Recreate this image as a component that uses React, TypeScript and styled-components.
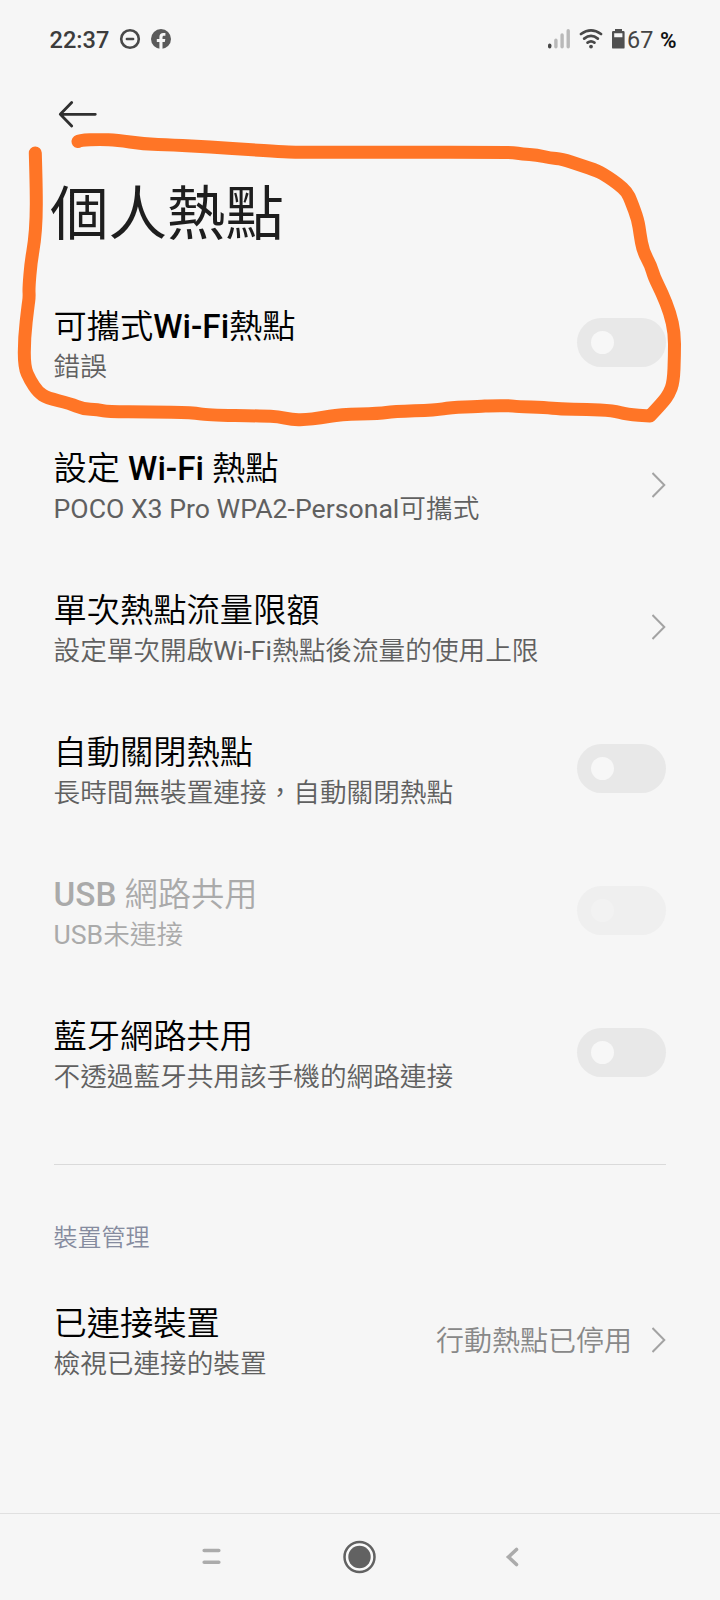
import React from "react";
import styled, { createGlobalStyle, css } from "styled-components";

const GlobalStyle = createGlobalStyle`
  * { box-sizing: border-box; }
  body {
    margin: 0;
    background: #f6f6f6;
    font-family: Roboto, "Noto Sans CJK TC", sans-serif;
  }
`;

const Screen = styled.main`
  position: relative;
  display: flex;
  flex-direction: column;
  width: 720px;
  height: 1600px;
  overflow: hidden;
  background: #f6f6f6;
`;

const StatusBar = styled.header`
  display: flex;
  align-items: center;
  justify-content: space-between;
  height: 78px;
  padding: 0 43px 0 49.5px;
`;

const StatusGroup = styled.div`
  display: flex;
  align-items: center;
`;

const Clock = styled.span`
  width: 69px;
  padding-top: 2px;
  font-size: 23.6px;
  font-weight: 500;
  line-height: 28px;
  color: #3c3c3c;
`;

const StatusIcon = styled.svg<{ $gap: number }>`
  display: block;
  flex: none;
  margin-right: ${(p) => p.$gap}px;
`;

const BatteryLevel = styled.span`
  width: 33px;
  padding-top: 2px;
  font-size: 23.4px;
  line-height: 28px;
  color: #444;
`;

const Percent = styled.span`
  width: 17px;
  padding-top: 2px;
  font-size: 22.5px;
  font-weight: 600;
  line-height: 28px;
  color: #111;
`;

const TitleArea = styled.div`
  display: flex;
  flex-direction: column;
  height: 193px;
  padding: 20px 0 0 50px;
`;

const BackButton = styled.button`
  display: block;
  width: 54px;
  height: 32px;
  padding: 0;
  border: 0;
  background: none;
`;

const PageTitle = styled.h1`
  margin: 42px 0 0;
  font-size: 58.6px;
  font-weight: 400;
  line-height: 86px;
  letter-spacing: -0.2px;
  color: #1e1e1e;
`;

const List = styled.section`
  display: flex;
  flex-direction: column;
`;

const Row = styled.div<{ $disabled?: boolean }>`
  display: flex;
  align-items: center;
  justify-content: space-between;
  height: 142px;
  padding: 0 54px 0 53.5px;
  ${(p) =>
    p.$disabled &&
    css`
      ${RowTitle}, ${RowSummary} { color: #aaa; }
    `}
`;

const RowText = styled.div`
  display: flex;
  flex-direction: column;
  padding-top: 4px;
  white-space: nowrap;
`;

const RowTitle = styled.div`
  font-size: 33.25px;
  font-weight: 350;
  line-height: 47px;
  color: #000;
`;

const Latin = styled.span<{ $weight?: number }>`
  font-weight: ${(p) => p.$weight ?? 500};
`;

const RowSummary = styled.div`
  font-size: 26.65px;
  font-weight: 350;
  line-height: 35px;
  color: #606060;
`;

const RowEnd = styled.div`
  display: flex;
  align-items: center;
`;

const RowValue = styled.span`
  margin-right: 20px;
  padding-top: 5px;
  font-size: 28px;
  font-weight: 350;
  line-height: 36px;
  color: #888;
`;

const ToggleTrack = styled.span<{ $disabled?: boolean }>`
  display: flex;
  align-items: center;
  width: 89px;
  height: 49px;
  padding-left: 13.5px;
  border-radius: 25px;
  background: ${(p) => (p.$disabled ? "#efefef" : "#e8e8e8")};
`;

const ToggleKnob = styled.span<{ $disabled?: boolean }>`
  width: 23px;
  height: 23px;
  border-radius: 50%;
  background: ${(p) => (p.$disabled ? "#f2f2f2" : "#f7f7f7")};
`;

const Divider = styled.hr`
  width: 612px;
  height: 1px;
  margin: 41px 54px 0;
  border: 0;
  background: #dadada;
`;

const SectionLabel = styled.h2`
  margin: 55px 53.5px 12px;
  font-size: 24px;
  font-weight: 350;
  line-height: 36px;
  color: #868c9f;
`;

const NavBar = styled.nav`
  display: flex;
  justify-content: center;
  gap: 114px;
  height: 87px;
  margin-top: auto;
  padding-top: 25px;
  border-top: 1px solid #e0e0e0;
`;

const NavButton = styled.button`
  display: block;
  width: 36px;
  height: 36px;
  padding: 0;
  border: 0;
  background: none;
`;

const Markup = styled.svg`
  position: absolute;
  inset: 0;
  pointer-events: none;
`;

const Chevron = () => (
  <svg width="14" height="28" viewBox="0 0 14 28" fill="none" stroke="#a3a3a3" strokeWidth="2">
    <path d="M0.500 3 12.300 15 0.500 27" />
  </svg>
);

const Toggle = ({ disabled }: { disabled?: boolean }) => (
  <ToggleTrack $disabled={disabled}>
    <ToggleKnob $disabled={disabled} />
  </ToggleTrack>
);

type SettingProps = {
  title: React.ReactNode;
  summary: React.ReactNode;
  control: "toggle" | "link";
  value?: string;
  disabled?: boolean;
};

const Setting = ({ title, summary, control, value, disabled }: SettingProps) => (
  <Row $disabled={disabled}>
    <RowText>
      <RowTitle>{title}</RowTitle>
      <RowSummary>{summary}</RowSummary>
    </RowText>
    <RowEnd>
      {value && <RowValue>{value}</RowValue>}
      {control === "toggle" ? <Toggle disabled={disabled} /> : <Chevron />}
    </RowEnd>
  </Row>
);

type Point = [number, number];

const strokePoints: Point[] = [
  [78, 141.5], [80, 140], [100, 139.5], [117, 140], [143, 144], [173, 145], [210, 147], [247, 149.5], [280, 151.7],
  [297, 152.3], [400, 152.3], [500, 152.3], [513, 152.5], [522, 154], [537, 155], [550, 158], [562, 159], [580, 165],
  [598, 171], [608, 177], [618, 184], [627, 192], [631, 201], [638, 220], [640, 234], [643, 251], [651, 266],
  [654, 277], [662, 293], [670, 313], [674.5, 333], [674.5, 355], [673.5, 382], [669, 394], [663, 402], [650, 416],
  [650, 416], [627, 414.6], [613, 410.6], [587, 409.5], [560, 409], [545, 407.5], [517, 406.5], [510, 405.7],
  [490, 405.7], [480, 406.5], [450, 407.6], [436, 410], [393, 411.5], [380, 413.5], [340, 414.5], [320, 418],
  [305, 419.8], [292, 419.5], [278, 416.7], [263, 416], [207, 415], [193, 412.6], [150, 412], [107, 411.7],
  [98, 409.7], [83, 409], [70, 403.5], [47, 398], [38, 392], [30, 380], [24.3, 367], [24.3, 338], [28, 306],
  [29.3, 297], [28.8, 288], [31, 262], [34.5, 242], [36.3, 218], [36.3, 190], [35.3, 153],
];

/* Joins the midpoints with quadratic curves, so the pen line stays smooth. */
const toSmoothPath = (points: Point[]) => {
  const last = points[points.length - 1];
  const curves = points.slice(1, -1).map(([x, y], i) => {
    const [nx, ny] = points[i + 2];
    return `Q${x} ${y} ${(x + nx) / 2} ${(y + ny) / 2}`;
  });
  return `M${points[0].join(" ")} ${curves.join(" ")} L${last.join(" ")}`;
};

export default function App() {
  return (
    <Screen lang="zh-Hant-TW">
      <GlobalStyle />
      <StatusBar>
        <StatusGroup>
          <Clock>22:37</Clock>
          <StatusIcon $gap={9.5} width="22" height="22" viewBox="0 0 22 22">
            <circle cx="11" cy="11" r="8.8" fill="none" stroke="#484848" strokeWidth="2.6" />
            <path d="M7.9 11h6.2" stroke="#484848" strokeWidth="2.6" strokeLinecap="round" />
          </StatusIcon>
          <StatusIcon $gap={0} width="22" height="22" viewBox="0 0 22 22">
            <circle cx="11" cy="11" r="10" fill="#5a5a5a" />
            <path
              d="M9.4 21.5v-7.4H6.8v-3h2.6V8.9c0-2.6 1.5-4 3.900-4 .8 0 1.700.1 2.100.2v2.600h-1.300c-1.200 0-1.600.7-1.600 1.500v1.900h2.800l-.5 3h-2.300v7.400z"
              fill="#f6f6f6"
            />
          </StatusIcon>
        </StatusGroup>
        <StatusGroup>
          <StatusIcon $gap={8} width="24" height="22" viewBox="0 0 24 22" strokeLinecap="round" strokeWidth="3.400">
            <path d="M2.700 17.200v1.600" stroke="#484848" />
            <path d="M8.900 12.300v6.500M15.100 7v11.800M21.200 2.800v16" stroke="#b9b9b9" />
          </StatusIcon>
          <StatusIcon $gap={8} width="24" height="22" viewBox="0 0 24 22" fill="none" stroke="#484848" strokeWidth="2.700" strokeLinecap="round">
            <path d="M2 6Q12 -1.400 22 6M5.200 10.600Q12 5 18.800 10.600M8.600 14.600Q12 12.100 15.400 14.600" />
            <circle cx="12" cy="18.600" r="1.900" fill="#484848" stroke="none" />
          </StatusIcon>
          <StatusIcon $gap={1} width="15" height="22" viewBox="0 0 15 22">
            <path
              fillRule="evenodd"
              d="M4 1h7v2h1.400a1.200 1.200 0 0 1 1.200 1.200v15.200a1.200 1.200 0 0 1-1.200 1.200H2.200a1.200 1.200 0 0 1-1.200-1.200V4.200A1.200 1.200 0 0 1 2.200 3H4zM3.200 5.200v4h8.200v-4z"
              fill="#505050"
            />
          </StatusIcon>
          <BatteryLevel>67</BatteryLevel>
          <Percent>%</Percent>
        </StatusGroup>
      </StatusBar>

      <TitleArea>
        <BackButton aria-label="返回">
          <svg width="54" height="32" viewBox="0 0 54 32" fill="none" stroke="#303030" strokeWidth="2.800" strokeLinecap="round" strokeLinejoin="round">
            <path d="M45.300 16.300H10.300M21.700 4.500 10.300 16.300 21.700 28" />
          </svg>
        </BackButton>
        <PageTitle>個人熱點</PageTitle>
      </TitleArea>

      <List>
        <Setting title={<>可攜式<Latin>Wi-Fi</Latin>熱點</>} summary="錯誤" control="toggle" />
        <Setting
          title={<>設定 <Latin>Wi-Fi</Latin> 熱點</>}
          summary={<><Latin $weight={400}>POCO X3 Pro WPA2-Personal</Latin>可攜式</>}
          control="link"
        />
        <Setting
          title="單次熱點流量限額"
          summary={<>設定單次開啟<Latin $weight={400}>Wi-Fi</Latin>熱點後流量的使用上限</>}
          control="link"
        />
        <Setting title="自動關閉熱點" summary="長時間無裝置連接，自動關閉熱點" control="toggle" />
        <Setting
          title={<><Latin>USB</Latin> 網路共用</>}
          summary={<><Latin $weight={400}>USB</Latin>未連接</>}
          control="toggle"
          disabled
        />
        <Setting title="藍牙網路共用" summary="不透過藍牙共用該手機的網路連接" control="toggle" />
      </List>

      <Divider />

      <List>
        <SectionLabel>裝置管理</SectionLabel>
        <Setting title="已連接裝置" summary="檢視已連接的裝置" control="link" value="行動熱點已停用" />
      </List>

      <NavBar>
        <NavButton aria-label="最近使用">
          <svg width="36" height="36" viewBox="0 0 36 36" stroke="#ababab" strokeWidth="3.600" strokeLinecap="round">
            <path d="M12.200 11.500h14.600M12.200 23.200h14.600" />
          </svg>
        </NavButton>
        <NavButton aria-label="主畫面">
          <svg width="36" height="36" viewBox="0 0 36 36">
            <circle cx="17.500" cy="18" r="15" fill="#fafafa" stroke="#626262" strokeWidth="2.500" />
            <circle cx="17.500" cy="18" r="11.200" fill="#626262" />
          </svg>
        </NavButton>
        <NavButton aria-label="返回">
          <svg width="36" height="36" viewBox="0 0 36 36" fill="none" stroke="#ababab" strokeWidth="3.600" strokeLinecap="round">
            <path d="M24.500 10.500 16.500 18l8 7.500" />
          </svg>
        </NavButton>
      </NavBar>

      <Markup width="720" height="440" viewBox="0 0 720 440" fill="none">
        <path d={toSmoothPath(strokePoints)} stroke="#ff7526" strokeWidth="13" strokeLinecap="round" strokeLinejoin="round" />
      </Markup>
    </Screen>
  );
}
